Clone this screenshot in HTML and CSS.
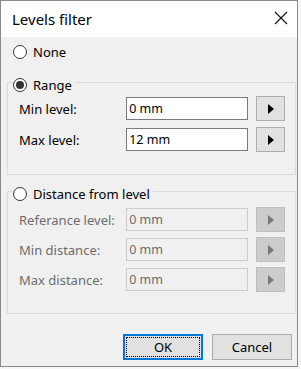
FILE: index.html
```html
<!DOCTYPE html>
<html lang="en">
<head>
    <meta charset="UTF-8">
    <title>Levels filter</title>
    <link rel="stylesheet" href="styles.css">
</head>
<body>
    <div class="window">
        <div class="titlebar">
            <span class="title">Levels filter</span>
            <svg class="close" width="14" height="14" viewBox="0 0 14 14">
                <path d="M1 1 L13 13 M13 1 L1 13" stroke="#111" stroke-width="1.1" fill="none"/>
            </svg>
        </div>
        <div class="client">
            <label class="radio none-option"><span class="dot"></span>None</label>

            <fieldset class="group">
                <legend><label class="radio"><span class="dot checked"></span>Range</label></legend>
                <div class="fields">
                    <div class="row">
                        <span class="caption">Min level:</span>
                        <input class="value" type="text" value="0 mm">
                        <button class="pick"><svg width="8" height="10" viewBox="0 0 8 10"><polygon points="1,0 7,5 1,10" /></svg></button>
                    </div>
                    <div class="row">
                        <span class="caption">Max level:</span>
                        <input class="value" type="text" value="12 mm">
                        <button class="pick"><svg width="8" height="10" viewBox="0 0 8 10"><polygon points="1,0 7,5 1,10" /></svg></button>
                    </div>
                </div>
            </fieldset>

            <fieldset class="group group-distance disabled">
                <legend><label class="radio"><span class="dot"></span>Distance from level</label></legend>
                <div class="fields">
                    <div class="row">
                        <span class="caption">Referance level:</span>
                        <input class="value" type="text" value="0 mm" disabled>
                        <button class="pick" disabled><svg width="8" height="10" viewBox="0 0 8 10"><polygon points="1,0 7,5 1,10" /></svg></button>
                    </div>
                    <div class="row">
                        <span class="caption">Min distance:</span>
                        <input class="value" type="text" value="0 mm" disabled>
                        <button class="pick" disabled><svg width="8" height="10" viewBox="0 0 8 10"><polygon points="1,0 7,5 1,10" /></svg></button>
                    </div>
                    <div class="row">
                        <span class="caption">Max distance:</span>
                        <input class="value" type="text" value="0 mm" disabled>
                        <button class="pick" disabled><svg width="8" height="10" viewBox="0 0 8 10"><polygon points="1,0 7,5 1,10" /></svg></button>
                    </div>
                </div>
            </fieldset>

            <div class="actions">
                <button class="action default">OK</button>
                <button class="action">Cancel</button>
            </div>
        </div>
    </div>
</body>
</html>
```

FILE: styles.css
```css
body {
    margin: 0;
    background-color: #f7f7f7;
    font-family: "Noto Sans", "Open Sans", sans-serif;
    font-size: 13px;
    color: #000000;
}

.window {
    width: 296px;
    height: 365px;
    border: 1px solid #8a8a8a;
    background-color: #f0f0f0;
    display: flex;
    flex-direction: column;
}

.titlebar {
    height: 36px;
    background-color: #ffffff;
    display: flex;
    align-items: center;
    justify-content: space-between;
    padding: 0 9px 0 11px;
}

.title {
    font-size: 15px;
    margin-top: -1px;
}

.close {
    margin-top: -2px;
}

.client {
    flex: 1;
    display: flex;
    flex-direction: column;
    padding: 0 0 0 6px;
}

.radio {
    display: flex;
    align-items: center;
    height: 16px;
    line-height: 16px;
}

.dot {
    width: 12px;
    height: 12px;
    border: 1px solid #333333;
    border-radius: 50%;
    background-color: #ffffff;
    margin-right: 6px;
    display: flex;
    align-items: center;
    justify-content: center;
}

.dot.checked::after {
    content: "";
    width: 8px;
    height: 8px;
    border-radius: 50%;
    background-color: #333333;
}

.none-option {
    margin: 7px 0 0 6px;
}

.group {
    margin: 11px 1px 0 0;
    padding: 3px 10px 22px 5px;
    border: 1px solid #dcdcdc;
    min-width: 0;
}

.group legend {
    padding: 6px 3px 0 0;
}

.group-distance {
    margin-top: 5px;
    padding-top: 5px;
    padding-bottom: 21px;
}

.fields {
    display: flex;
    flex-direction: column;
    gap: 6px;
    padding-left: 6px;
}

.group-distance .fields {
    gap: 5px;
}

.row {
    display: flex;
    align-items: center;
    height: 25px;
}

.caption {
    width: 108px;
    white-space: nowrap;
}

.value {
    width: 122px;
    height: 23px;
    box-sizing: border-box;
    border: 1px solid #7a7a7a;
    background-color: #ffffff;
    font-family: inherit;
    font-size: 12.5px;
    padding: 0 2px;
    margin: 0 8px 0 0;
    color: #000000;
    outline: none;
}

.pick {
    width: 29px;
    height: 25px;
    box-sizing: border-box;
    padding: 0;
    border: 1px solid #adadad;
    background-color: #e1e1e1;
    display: flex;
    align-items: center;
    justify-content: center;
}

.pick polygon {
    fill: #000000;
}

.disabled .caption,
.disabled .value {
    color: #6d6d6d;
}

.disabled .value {
    background-color: #f0f0f0;
    border-color: #cccccc;
}

.disabled .pick {
    background-color: #cccccc;
    border-color: #bfbfbf;
}

.disabled .pick polygon {
    fill: #777777;
}

.actions {
    display: flex;
    justify-content: flex-end;
    gap: 9px;
    margin: 20px 5px 0 0;
}

.action {
    width: 80px;
    height: 26px;
    box-sizing: border-box;
    border: 1px solid #adadad;
    background-color: #e1e1e1;
    font-family: inherit;
    font-size: 13px;
    color: #000000;
    padding: 0;
}

.action.default {
    border: 2px solid #0078d7;
    outline: 1px dotted #000000;
    outline-offset: -4px;
}
```
